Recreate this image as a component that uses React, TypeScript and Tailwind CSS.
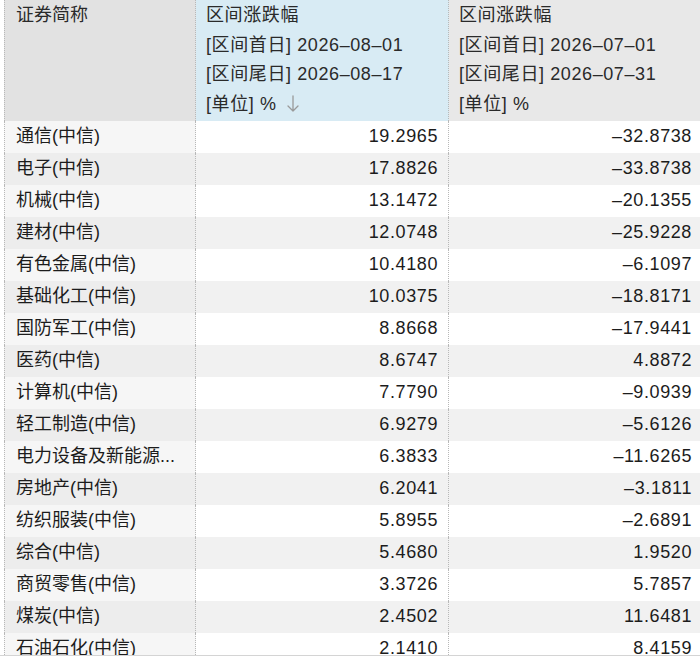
const rows: [string, string, string][] = [
  ["通信(中信)", "19.2965", "–32.8738"],
  ["电子(中信)", "17.8826", "–33.8738"],
  ["机械(中信)", "13.1472", "–20.1355"],
  ["建材(中信)", "12.0748", "–25.9228"],
  ["有色金属(中信)", "10.4180", "–6.1097"],
  ["基础化工(中信)", "10.0375", "–18.8171"],
  ["国防军工(中信)", "8.8668", "–17.9441"],
  ["医药(中信)", "8.6747", "4.8872"],
  ["计算机(中信)", "7.7790", "–9.0939"],
  ["轻工制造(中信)", "6.9279", "–5.6126"],
  ["电力设备及新能源...", "6.3833", "–11.6265"],
  ["房地产(中信)", "6.2041", "–3.1811"],
  ["纺织服装(中信)", "5.8955", "–2.6891"],
  ["综合(中信)", "5.4680", "1.9520"],
  ["商贸零售(中信)", "3.3726", "5.7857"],
  ["煤炭(中信)", "2.4502", "11.6481"],
  ["石油石化(中信)", "2.1410", "8.4159"],
]

function SortDown() {
  return (
    <svg className="inline-block ml-[10px] -mt-[3px]" width="12" height="17" viewBox="0 0 12 17" fill="none">
      <path d="M6 1v15M1 11l5 5 5-5" stroke="#9a9a9a" strokeWidth="1.3" strokeLinecap="round" strokeLinejoin="round" />
    </svg>
  )
}

export default function App() {
  return (
    <div className="w-[700px] h-[659px] bg-white font-['Liberation_Sans','Noto_Sans_CJK_SC',sans-serif] text-[18px] text-[#1c1c1c]">
      <div className="h-[656px] overflow-hidden border-b border-[#d4d4d4] pl-[4px]">
        {/* 表头 */}
        <div className="grid grid-cols-[192px_253px_1fr] h-[121px]">
          <div className="bg-[#e2e2e2] border-l border-r border-dotted border-[#b8b8b8] pl-[11px] pt-[1px] leading-[29.5px] text-[#2a2a2a]">
            证券简称
          </div>
          <div className="bg-[#d8ebf4] border-r border-dotted border-[#b8b8b8] pl-[10px] pt-[1px] leading-[29.5px] text-[#2a2a2a] tracking-[0.6px]">
            <div>区间涨跌幅</div>
            <div>[区间首日] 2026–08–01</div>
            <div>[区间尾日] 2026–08–17</div>
            <div>
              [单位] %
              <SortDown />
            </div>
          </div>
          <div className="bg-[#e8e8e8] pl-[10px] pt-[1px] leading-[29.5px] text-[#2a2a2a] tracking-[0.6px]">
            <div>区间涨跌幅</div>
            <div>[区间首日] 2026–07–01</div>
            <div>[区间尾日] 2026–07–31</div>
            <div>[单位] %</div>
          </div>
        </div>

        {/* 数据行 */}
        {rows.map(([name, a, b], i) => {
          const even = i % 2 === 1
          return (
            <div key={name} className="grid grid-cols-[192px_253px_1fr] h-[32px] leading-[31px]">
              <div
                className={`border-l border-r border-dotted border-[#b8b8b8] pl-[11px] whitespace-nowrap ${
                  even ? "bg-[#ededed]" : "bg-[#f6f6f6]"
                }`}
              >
                {name}
              </div>
              <div
                className={`border-r border-dotted border-[#b8b8b8] pr-[10px] text-right tracking-[0.6px] ${
                  even ? "bg-[#f1f1f1]" : "bg-white"
                }`}
              >
                {a}
              </div>
              <div className={`pr-[8px] text-right tracking-[0.6px] ${even ? "bg-[#f1f1f1]" : "bg-white"}`}>{b}</div>
            </div>
          )
        })}
      </div>
    </div>
  )
}
